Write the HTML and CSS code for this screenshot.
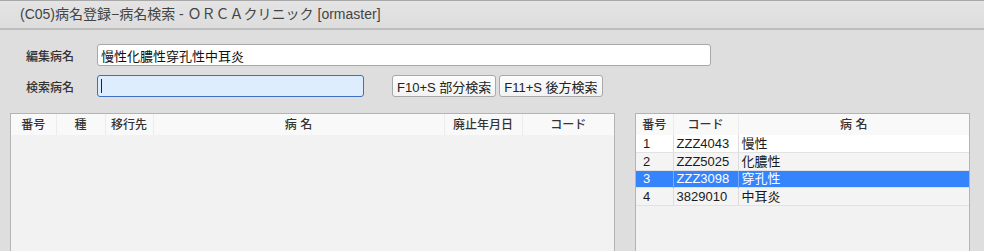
FILE: index.html
```html
<!DOCTYPE html>
<html lang="ja">
<head>
  <meta charset="UTF-8">
  <title>病名検索</title>
  <link rel="stylesheet" href="styles.css">
</head>
<body>

<div class="titlebar">(C05)病名登録−病名検索 - ＯＲＣＡクリニック [ormaster]</div>

<div class="form">
  <div class="row">
    <label class="label">編集病名</label>
    <input class="field edit" type="text" value="慢性化膿性穿孔性中耳炎">
  </div>
  <div class="row">
    <label class="label">検索病名</label>
    <div class="field search"><span class="caret"></span></div>
    <div class="buttons">
      <button class="btn">F10+S 部分検索</button>
      <button class="btn">F11+S 後方検索</button>
    </div>
  </div>
</div>

<div class="lists">
  <div class="panel left">
    <table>
      <colgroup>
        <col style="width:45px">
        <col style="width:49px">
        <col style="width:48px">
        <col style="width:291px">
        <col style="width:78px">
        <col>
      </colgroup>
      <thead>
        <tr><th>番号</th><th>種</th><th>移行先</th><th>病 名</th><th>廃止年月日</th><th>コード</th></tr>
      </thead>
    </table>
  </div>

  <div class="panel right">
    <table>
      <colgroup>
        <col style="width:37px">
        <col style="width:65px">
        <col>
      </colgroup>
      <thead>
        <tr><th>番号</th><th>コード</th><th>病 名</th></tr>
      </thead>
      <tbody>
        <tr><td>1</td><td>ZZZ4043</td><td>慢性</td></tr>
        <tr><td>2</td><td>ZZZ5025</td><td>化膿性</td></tr>
        <tr class="selected"><td>3</td><td>ZZZ3098</td><td>穿孔性</td></tr>
        <tr><td>4</td><td>3829010</td><td>中耳炎</td></tr>
      </tbody>
    </table>
  </div>
</div>

</body>
</html>
```

FILE: styles.css
```css
* {
  margin: 0;
  padding: 0;
  box-sizing: border-box;
}

body {
  background-color: #dedede;
  font-family: "Liberation Sans", "Noto Sans CJK JP", sans-serif;
  color: #2e2e2e;
  overflow: hidden;
}

.titlebar {
  height: 30px;
  border-top: 1px solid #a9a9a9;
  border-bottom: 2px solid #bdbdbd;
  background: linear-gradient(#e4e4e4, #dddddd);
  padding-left: 20px;
  font-size: 14px;
  line-height: 27px;
  color: #444;
}

.form {
  padding: 14px 0 0 26px;
}

.row {
  display: flex;
  align-items: center;
  height: 22px;
  margin-bottom: 9px;
}

.label {
  width: 71px;
  font-size: 12px;
  font-weight: 500;
  color: #333;
}

.field {
  height: 22px;
  border: 1px solid #a8a8a8;
  border-radius: 3px;
  background-color: #fff;
  font-family: inherit;
  font-size: 13px;
  color: #111;
  padding: 0 3px;
}

.edit {
  width: 614px;
  outline: none;
}

.search {
  width: 267px;
  border: 1px solid #3d6fc4;
  background-color: #deedfd;
  display: flex;
  align-items: center;
}

.caret {
  width: 1px;
  height: 14px;
  background-color: #222;
}

.buttons {
  display: flex;
  gap: 3px;
  margin-left: 28px;
}

.btn {
  height: 22px;
  padding: 0 4px;
  border: 1px solid #a9a9a9;
  border-radius: 3px;
  background: linear-gradient(#fdfdfd, #f2f2f2);
  font-family: inherit;
  font-size: 13px;
  color: #222;
}

.lists {
  display: flex;
  padding: 7px 0 0 10px;
}

.panel {
  height: 150px;
  border: 1px solid #b4b4b4;
  background-color: #f2f2f2;
}

.left {
  width: 605px;
}

.right {
  width: 335px;
  margin-left: 20px;
}

table {
  width: 100%;
  border-collapse: collapse;
  table-layout: fixed;
}

th {
  height: 21px;
  line-height: 16px;
  background-color: #f9f9f9;
  border-right: 1px solid #ececec;
  font-size: 12px;
  font-weight: 500;
  color: #333;
  text-align: center;
}

th:last-child {
  border-right: none;
}

td {
  height: 17.5px;
  line-height: 15px;
  padding: 0 0 0 3px;
  border-right: 1px solid #dcdcdc;
  border-top: 1px solid #e2e2e2;
  font-size: 13px;
  color: #1a1a1a;
  white-space: nowrap;
}

td:first-child {
  padding-left: 7px;
}

td:last-child {
  border-right: none;
}

tbody tr:nth-child(odd) {
  background-color: #fff;
}

tbody tr:nth-child(even) {
  background-color: #f4f4f4;
}

tbody tr:first-child td {
  border-top: none;
}

tbody tr:last-child td {
  border-bottom: 1px solid #e2e2e2;
}

tbody tr.selected {
  background-color: #3584fb;
}

tr.selected td {
  color: #fff;
  border-right-color: #78aafc;
}
```
